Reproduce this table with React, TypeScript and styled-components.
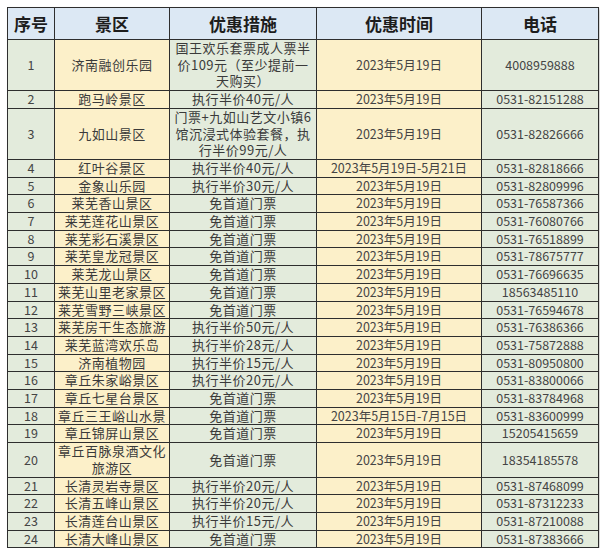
import React from 'react';
import styled, { createGlobalStyle } from 'styled-components';

const GlobalStyle = createGlobalStyle`
  body {
    margin: 0;
    background: #ffffff;
    font-family: "Noto Sans CJK SC", "Noto Sans", sans-serif;
  }
`;

const Page = styled.div`
  padding: 7px 7px 0 7px;
`;

const Table = styled.table`
  width: 586px;
  border-collapse: collapse;
  table-layout: fixed;
  border: 1px solid #8a8a8a;
  box-shadow: 2px 2px 3px rgba(0, 0, 0, 0.18);
`;

const HeadCell = styled.th<{ w: number }>`
  width: ${({ w }) => w}px;
  height: 31px;
  padding: 0;
  background-color: #dce8f4;
  border: 1px solid #2e2e2e;
  color: #1d1d1d;
  font-size: 17px;
  line-height: 20px;
  font-weight: 700;
  text-align: center;
  vertical-align: middle;
`;

const Cell = styled.td<{ tone: 'green' | 'yellow' }>`
  padding: 0 2px;
  background-color: ${({ tone }) => (tone === 'yellow' ? '#fcf0c9' : '#e3ebdc')};
  border: 1px solid #2e2e2e;
  color: #3a3a3a;
  font-size: 13px;
  line-height: 16.7px;
  letter-spacing: 0.5px;
  text-align: center;
  vertical-align: middle;
  word-break: break-all;
`;

// numbers, dates and phone numbers sit tighter than the Chinese text
const DataCell = styled(Cell)`
  font-size: 12.5px;
  letter-spacing: 0;
  color: #444;
`;

interface Spot {
  no: number;
  name: string;
  offer: string;
  time: string;
  phone: string;
}

const spots: Spot[] = [
  { no: 1, name: '济南融创乐园', offer: '国王欢乐套票成人票半价109元（至少提前一天购买）', time: '2023年5月19日', phone: '4008959888' },
  { no: 2, name: '跑马岭景区', offer: '执行半价40元/人', time: '2023年5月19日', phone: '0531-82151288' },
  { no: 3, name: '九如山景区', offer: '门票+九如山艺文小镇6馆沉浸式体验套餐，执行半价99元/人', time: '2023年5月19日', phone: '0531-82826666' },
  { no: 4, name: '红叶谷景区', offer: '执行半价40元/人', time: '2023年5月19日-5月21日', phone: '0531-82818666' },
  { no: 5, name: '金象山乐园', offer: '执行半价30元/人', time: '2023年5月19日', phone: '0531-82809996' },
  { no: 6, name: '莱芜香山景区', offer: '免首道门票', time: '2023年5月19日', phone: '0531-76587366' },
  { no: 7, name: '莱芜莲花山景区', offer: '免首道门票', time: '2023年5月19日', phone: '0531-76080766' },
  { no: 8, name: '莱芜彩石溪景区', offer: '免首道门票', time: '2023年5月19日', phone: '0531-76518899' },
  { no: 9, name: '莱芜皇龙冠景区', offer: '免首道门票', time: '2023年5月19日', phone: '0531-78675777' },
  { no: 10, name: '莱芜龙山景区', offer: '免首道门票', time: '2023年5月19日', phone: '0531-76696635' },
  { no: 11, name: '莱芜山里老家景区', offer: '免首道门票', time: '2023年5月19日', phone: '18563485110' },
  { no: 12, name: '莱芜雪野三峡景区', offer: '免首道门票', time: '2023年5月19日', phone: '0531-76594678' },
  { no: 13, name: '莱芜房干生态旅游', offer: '执行半价50元/人', time: '2023年5月19日', phone: '0531-76386366' },
  { no: 14, name: '莱芜蓝湾欢乐岛', offer: '执行半价28元/人', time: '2023年5月19日', phone: '0531-75872888' },
  { no: 15, name: '济南植物园', offer: '执行半价15元/人', time: '2023年5月19日', phone: '0531-80950800' },
  { no: 16, name: '章丘朱家峪景区', offer: '执行半价20元/人', time: '2023年5月19日', phone: '0531-83800066' },
  { no: 17, name: '章丘七星台景区', offer: '免首道门票', time: '2023年5月19日', phone: '0531-83784968' },
  { no: 18, name: '章丘三王峪山水景', offer: '免首道门票', time: '2023年5月15日-7月15日', phone: '0531-83600999' },
  { no: 19, name: '章丘锦屏山景区', offer: '免首道门票', time: '2023年5月19日', phone: '15205415659' },
  { no: 20, name: '章丘百脉泉酒文化旅游区', offer: '免首道门票', time: '2023年5月19日', phone: '18354185578' },
  { no: 21, name: '长清灵岩寺景区', offer: '执行半价20元/人', time: '2023年5月19日', phone: '0531-87468099' },
  { no: 22, name: '长清五峰山景区', offer: '执行半价20元/人', time: '2023年5月19日', phone: '0531-87312233' },
  { no: 23, name: '长清莲台山景区', offer: '执行半价15元/人', time: '2023年5月19日', phone: '0531-87210088' },
  { no: 24, name: '长清大峰山景区', offer: '免首道门票', time: '2023年5月19日', phone: '0531-87383666' },
];

const App: React.FC = () => {
  return (
    <Page>
      <GlobalStyle />
      <Table>
        <thead>
          <tr>
            <HeadCell w={46}>序号</HeadCell>
            <HeadCell w={114}>景区</HeadCell>
            <HeadCell w={146}>优惠措施</HeadCell>
            <HeadCell w={164}>优惠时间</HeadCell>
            <HeadCell w={116}>电话</HeadCell>
          </tr>
        </thead>
        <tbody>
          {spots.map(spot => (
            <tr key={spot.no}>
              <DataCell tone="green">{spot.no}</DataCell>
              <Cell tone="yellow">{spot.name}</Cell>
              <Cell tone="green">{spot.offer}</Cell>
              <DataCell tone="yellow">{spot.time}</DataCell>
              <DataCell tone="green">{spot.phone}</DataCell>
            </tr>
          ))}
        </tbody>
      </Table>
    </Page>
  );
};

export default App;
